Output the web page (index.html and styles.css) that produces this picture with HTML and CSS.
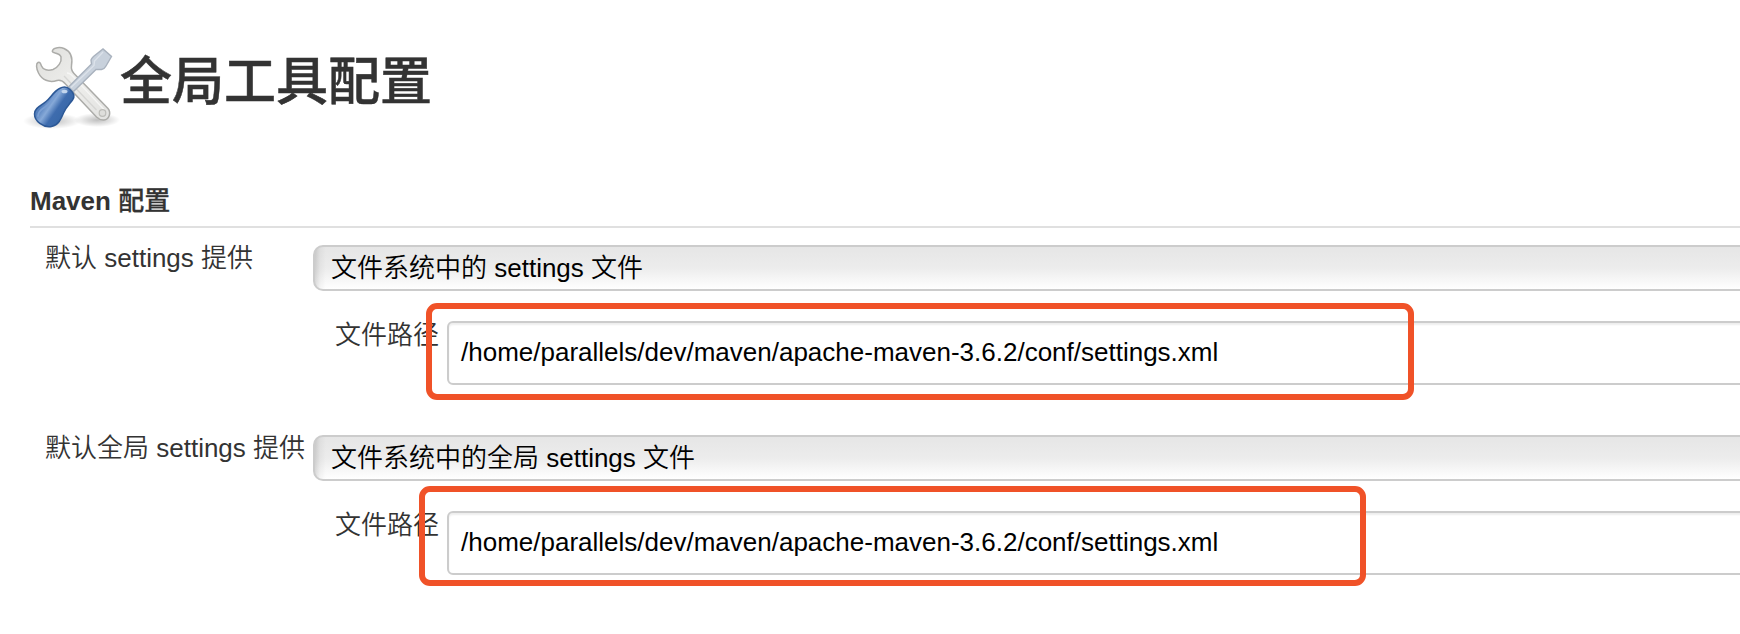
FILE: index.html
```html
<!DOCTYPE html>
<html lang="zh-CN">
<head>
<meta charset="utf-8">
<title>全局工具配置</title>
<link rel="stylesheet" href="styles.css">
</head>
<body>
<main class="page">
  <header class="header">
    <svg class="tools" viewBox="0 0 120 110" aria-hidden="true">
      <defs>
        <radialGradient id="shade"><stop offset="0" stop-color="#000" stop-opacity=".25"/><stop offset="1" stop-color="#000" stop-opacity="0"/></radialGradient>
        <linearGradient id="steel" x1="0" y1="0" x2="1" y2="1"><stop offset="0" stop-color="#dededb"/><stop offset=".5" stop-color="#eeeeec"/><stop offset="1" stop-color="#e2e2e0"/></linearGradient>
        <linearGradient id="grip" x1="0" y1="0" x2="1" y2=".7"><stop offset="0" stop-color="#5d88c4"/><stop offset=".35" stop-color="#5580bd"/><stop offset=".5" stop-color="#86a9d8"/><stop offset=".65" stop-color="#3e6cae"/><stop offset="1" stop-color="#3465a4"/></linearGradient>
      </defs>
      <ellipse cx="42" cy="91" rx="29" ry="8" fill="url(#shade)"/>
      <ellipse cx="87" cy="90" rx="23" ry="7" fill="url(#shade)"/>
      <path d="M42.500 20.500C44 17.500 50 16.800 54 18.500C61 21.500 63 27 61.500 35.500C61 39 61.500 41 64 43.500L98 78.500C101.500 83 99 89.500 94 90C91 90.300 88.500 89 86.500 87L55.500 54C53 51 51 49.500 47 50.500C39 53 32 50 28.500 43C26 38 26 33.500 28 32.500C30 31.500 30.500 33.500 31.500 36C33 40 38 41 43 39.500C48 37.500 52 32 51 27C50.500 24 47.500 23.500 44.500 22.800C42.500 22.300 42 21.500 42.500 20.500Z" fill="url(#steel)" stroke="#acaca9" stroke-width="1.500"/>
      <path d="M57 43Q60 43 63 46.500L94.500 80" fill="none" stroke="#f6f6f5" stroke-width="1.300"/>
      <path d="M54 46L86.500 80" fill="none" stroke="#d6d6d4" stroke-width="1.300"/>
      <circle cx="92.500" cy="83" r="3.300" fill="#dededb" stroke="#bdbdb9" stroke-width="1.200"/>
      <path d="M58.500 57L81.500 34L81 30Q81.500 28.500 83.500 26.500L93 19L101.500 26.500L96 36Q94.500 39 91.500 39.500L86 39.500L63.500 61.500Z" fill="#c8d1dc" stroke="#a9b2be" stroke-width="1.400"/>
      <path d="M61 57.500L84 35.500L84.500 31L93 22" fill="none" stroke="#dce2ea" stroke-width="1.400"/>
      <path d="M49.500 58.500C53 56.500 57 56.500 60 59.500C63.500 62.500 65 66.500 62.500 70C59 74.500 56 77 53.500 83C51 89 48.500 95 41.500 96.500C33 98 24.500 91 24.500 84C24.500 77.500 31.500 75.500 36 71.500C41 67.500 43.500 61.500 49.500 58.500Z" fill="url(#grip)" stroke="#2c5896" stroke-width="1.500"/>
      <path d="M47 63C43 69 41 73 35 77C31 79.500 28 82 28 86" fill="none" stroke="#7a9fd3" stroke-width="1.800" stroke-linecap="round"/>
      <ellipse cx="54.500" cy="61.500" rx="3" ry="1.800" fill="#c3d6ee"/>
    </svg>
    <h1 class="title">全局工具配置</h1>
  </header>
  <h2 class="section">Maven <span class="section-cjk">配置</span></h2>
  <section class="row">
    <div class="label">默认 settings 提供</div>
    <div class="content">
      <div class="select">文件系统中的 settings 文件</div>
      <div class="field">
        <div class="sublabel">文件路径</div>
        <div class="input">/home/parallels/dev/maven/apache-maven-3.6.2/conf/settings.xml</div>
      </div>
    </div>
    <div class="mark mark-first"></div>
  </section>
  <section class="row">
    <div class="label">默认全局 settings 提供</div>
    <div class="content">
      <div class="select">文件系统中的全局 settings 文件</div>
      <div class="field">
        <div class="sublabel">文件路径</div>
        <div class="input">/home/parallels/dev/maven/apache-maven-3.6.2/conf/settings.xml</div>
      </div>
    </div>
    <div class="mark mark-second"></div>
  </section>
</main>
</body>
</html>
```
FILE: styles.css
```css
* { box-sizing: border-box; }
body {
  margin: 0;
  background: #fff;
  color: #333;
  font: 350 26px/34px "Liberation Sans", "Noto Sans CJK SC", sans-serif;
  overflow: hidden;
}
.page { height: 634px; overflow: hidden; }
.header { display: flex; padding: 30px 0 0 10px; height: 180px; }
.tools { width: 120px; height: 110px; flex: none; }
.title { margin: 17px 0 0 -10px; font-size: 52px; line-height: 70px; font-weight: 500; -webkit-text-stroke: 0.5px #333; }
.section {
  margin: 0 0 0 30px;
  height: 48px;
  padding-top: 4px;
  font-size: 26px;
  line-height: 34px;
  font-weight: 700;
  border-bottom: 2px solid #e0e0e0;
}
.section-cjk { font-weight: 500; -webkit-text-stroke: 0.3px #333; }
.row { position: relative; display: flex; height: 190px; padding-top: 17px; white-space: nowrap; }
.label { width: 313px; padding-left: 45px; flex: none; margin-top: -4px; }
.content { flex: 1; margin-right: -20px; }
.select {
  height: 46px;
  padding: 4px 16px;
  line-height: 34px;
  color: #000;
  border: 2px solid #ccc;
  border-radius: 10px;
  background:
    linear-gradient(90deg, rgba(0, 0, 0, .13), rgba(0, 0, 0, .04) 5px, transparent 11px),
    linear-gradient(#e6e6e6, #ececec 50%, #fff);
}
.field { display: flex; padding: 30px 0 0 22px; }
.sublabel { width: 112px; margin-top: -3px; flex: none; }
.input {
  flex: 1;
  height: 64px;
  padding: 12px;
  color: #000;
  border: 2px solid #ccc;
  border-radius: 6px;
  background: #fff;
  box-shadow: inset 0 2px 2px #eee;
}
.mark { position: absolute; border: 6px solid #f05228; border-radius: 11px; }
.mark-first { left: 426px; top: 75px; width: 988px; height: 97px; }
.mark-second { left: 419px; top: 67.500px; width: 947px; height: 100.500px; }
```
